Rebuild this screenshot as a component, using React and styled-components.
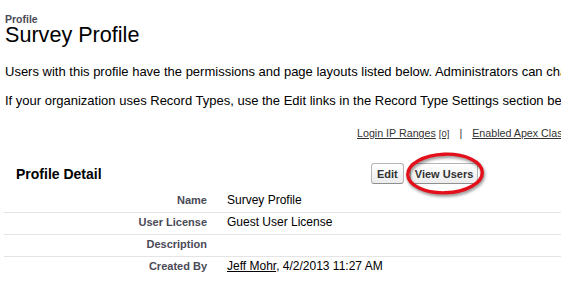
import React from "react";
import styled, { createGlobalStyle } from "styled-components";

const Global = createGlobalStyle`
  html, body { margin: 0; padding: 0; background: #fff; overflow: hidden; }
  body { font-family: "Liberation Sans", Arial, Helvetica, sans-serif; color: #000; }
`;

const Page = styled.div`
  width: 1000px;
  padding: 14px 0 0 5px;
  box-sizing: border-box;
`;

const Crumb = styled.div`
  font-size: 10.5px;
  line-height: 10px;
  font-weight: bold;
  color: #4a4a56;
`;

const Title = styled.h1`
  margin: 0;
  font-size: 21.6px;
  line-height: 22px;
  font-weight: normal;
  color: #000;
`;

const Para = styled.p`
  margin: ${(p) => p.$top}px 0 0;
  font-size: 13px;
  line-height: 15px;
  white-space: nowrap;
`;

const LinksBar = styled.div`
  margin-top: 19px;
  padding-left: 352px;
  display: flex;
  align-items: baseline;
  font-size: 10.7px;
  line-height: 13px;
  color: #333;
  white-space: nowrap;
`;

const Link = styled.a`
  color: #333;
  text-decoration: underline;
`;

const Count = styled.span`
  font-size: 9.5px;
  margin-left: 3px;
  text-decoration: underline;
`;

const Sep = styled.span`
  margin: 0 10px;
  color: #333;
`;

const Section = styled.div`
  margin-top: 23px;
  margin-left: -1px;
`;

const SectionHeader = styled.div`
  display: grid;
  grid-template-columns: 367px auto;
  align-items: center;
  height: 21px;
`;

const SectionTitle = styled.h2`
  margin: 0 0 0 12px;
  font-size: 14px;
  line-height: 16px;
  font-weight: bold;
  color: #000;
`;

const Buttons = styled.div`
  display: flex;
  gap: 6px;
`;

const Button = styled.button`
  height: 21px;
  padding: 0 ${(p) => p.$pad}px;
  font-family: "Liberation Sans", Arial, Helvetica, sans-serif;
  font-size: 11px;
  font-weight: bold;
  color: #333;
  background: linear-gradient(#ffffff, #ececec);
  border: 1px solid #b5b5b5;
  border-bottom-color: #8f8f8f;
  border-radius: 3px;
  cursor: pointer;
`;

const Circled = styled.span`
  position: relative;
  display: inline-flex;
`;

const Ring = styled.svg`
  position: absolute;
  left: -6px;
  top: -12px;
  width: 90px;
  height: 52px;
  overflow: visible;
  pointer-events: none;
  filter: drop-shadow(1px 2px 1.5px rgba(0, 0, 0, 0.45));
`;

const Details = styled.div`
  margin-top: 7px;
`;

const Row = styled.div`
  display: grid;
  grid-template-columns: 203px 1fr;
  column-gap: 20px;
  align-items: baseline;
  height: 22px;
  padding-top: 2px;
  box-sizing: border-box;
  border-bottom: ${(p) => (p.$last ? "none" : "1px solid #e4e4e4")};
`;

const Label = styled.div`
  text-align: right;
  font-size: 11px;
  line-height: 14px;
  font-weight: bold;
  color: #4a4a56;
`;

const Value = styled.div`
  font-size: 12px;
  line-height: 14px;
  color: #000;
  white-space: nowrap;
`;

const UserLink = styled.a`
  color: #000;
  text-decoration: underline;
`;

const rows = [
  { label: "Name", value: "Survey Profile" },
  { label: "User License", value: "Guest User License" },
  { label: "Description", value: "" },
  { label: "Created By", user: "Jeff Mohr", value: ", 4/2/2013 11:27 AM" },
];

export default function App() {
  return (
    <>
      <Global />
      <Page>
        <Crumb>Profile</Crumb>
        <Title>Survey Profile</Title>
        <Para $top={18}>
          Users with this profile have the permissions and page layouts listed below. Administrators can change a user's profile by editing that user's personal information.
        </Para>
        <Para $top={14}>
          If your organization uses Record Types, use the Edit links in the Record Type Settings section below to make one or more record types available to users with this profile.
        </Para>
        <LinksBar>
          <Link href="#">Login IP Ranges</Link>
          <Count>[0]</Count>
          <Sep>|</Sep>
          <Link href="#">Enabled Apex Class Access</Link>
        </LinksBar>
        <Section>
          <SectionHeader>
            <SectionTitle>Profile Detail</SectionTitle>
            <Buttons>
              <Button $pad={5}>Edit</Button>
              <Circled>
                <Button $pad={4}>View Users</Button>
                <Ring viewBox="0 0 90 52">
                  <ellipse
                    cx="41"
                    cy="22.5"
                    rx="37.3"
                    ry="19.3"
                    fill="none"
                    stroke="#e3101b"
                    strokeWidth="3.4"
                    transform="rotate(-2 41 22.5)"
                  />
                </Ring>
              </Circled>
            </Buttons>
          </SectionHeader>
          <Details>
            {rows.map((r, i) => (
              <Row key={r.label} $last={i === rows.length - 1}>
                <Label>{r.label}</Label>
                <Value>
                  {r.user && <UserLink href="#">{r.user}</UserLink>}
                  {r.value}
                </Value>
              </Row>
            ))}
          </Details>
        </Section>
      </Page>
    </>
  );
}
